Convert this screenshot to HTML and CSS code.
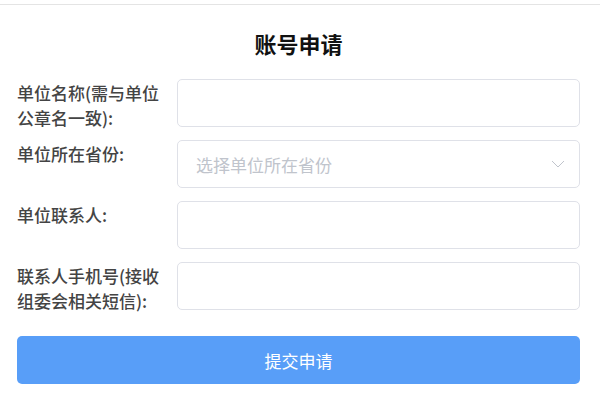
FILE: index.html
```html
<!DOCTYPE html>
<html lang="zh-CN">
<head>
    <meta charset="UTF-8">
    <title>账号申请</title>
    <link rel="stylesheet" href="styles.css">
</head>
<body>
    <div class="barra"></div>

    <div class="formulario">
        <h1 class="titulo">账号申请</h1>

        <div class="fila">
            <label class="etiqueta">单位名称(需与单位公章名一致):</label>
            <input class="campo" type="text">
        </div>

        <div class="fila">
            <label class="etiqueta">单位所在省份:</label>
            <div class="campo selector">
                <span class="placeholder">选择单位所在省份</span>
                <svg class="flecha" width="14" height="8" viewBox="0 0 14 8"><path d="M1 1 L7 7 L13 1" fill="none" stroke="#c0c4cc" stroke-width="1"/></svg>
            </div>
        </div>

        <div class="fila">
            <label class="etiqueta">单位联系人:</label>
            <input class="campo" type="text">
        </div>

        <div class="fila">
            <label class="etiqueta">联系人手机号(接收组委会相关短信):</label>
            <input class="campo" type="text">
        </div>

        <button class="enviar">提交申请</button>
    </div>
</body>
</html>
```

FILE: styles.css
```css
body { margin: 0; background: #fff; font-family: "Noto Sans CJK SC", "Noto Sans", sans-serif; }
.barra { height: 4px; border-bottom: 1px solid #e4e4e4; }
.formulario { padding: 0 20px 0 17px; }
.titulo { margin: 0; height: 74px; line-height: 76px; text-align: center; font-size: 22px; font-weight: 700; color: #111; }
.fila { display: flex; align-items: flex-start; gap: 10px; height: 48px; margin-bottom: 13px; }
.etiqueta { width: 150px; flex: none; padding-top: 1px; font-size: 17px; line-height: 25px; font-weight: 500; color: #444; }
.campo { flex: 1; height: 48px; box-sizing: border-box; border: 1px solid #dfe1e8; border-radius: 5px; background: #fff; outline: none; }
.selector { display: flex; align-items: center; justify-content: space-between; padding: 0 14px 0 18px; }
.placeholder { font-size: 17px; color: #c0c4cc; }
.enviar { display: block; width: 100%; height: 48px; margin-top: 26px; border: none; border-radius: 5px; background: #589ef8; color: #fff; font-family: inherit; font-size: 17px; font-weight: 400; }
```
